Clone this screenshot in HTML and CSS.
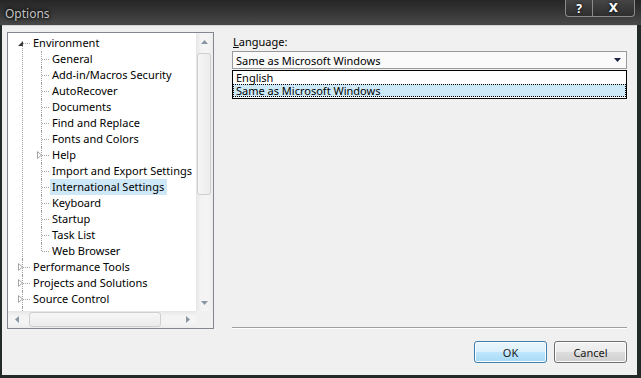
FILE: index.html
```html
<!DOCTYPE html>
<html lang="en">
<head>
    <meta charset="UTF-8">
    <title>Options</title>
    <link rel="stylesheet" href="styles.css">
</head>
<body>
    <div class="window">
        <div class="titlebar">
            <span class="title">Options</span>
            <div class="caption-buttons">
                <span class="cap-btn help">?</span>
                <span class="cap-btn close">X</span>
            </div>
        </div>

        <div class="client">
            <div class="main">
                <!-- Category tree -->
                <div class="tree-box">
                    <div class="tree-view">
                        <ul class="tree">
                            <li class="first">
                                <svg class="exp exp-open" width="5" height="5"><path d="M5 0 L5 5 L0 5 Z" fill="#3a3a3a"/></svg>
                                <span class="label">Environment</span>
                                <ul>
                                    <li><span class="label">General</span></li>
                                    <li><span class="label">Add-in/Macros Security</span></li>
                                    <li><span class="label">AutoRecover</span></li>
                                    <li><span class="label">Documents</span></li>
                                    <li><span class="label">Find and Replace</span></li>
                                    <li><span class="label">Fonts and Colors</span></li>
                                    <li>
                                        <svg class="exp" width="5" height="8"><path d="M0.5 0.5 L4.5 4 L0.5 7.5 Z" fill="#fff" stroke="#a6a6a6"/></svg>
                                        <span class="label">Help</span>
                                    </li>
                                    <li><span class="label">Import and Export Settings</span></li>
                                    <li><span class="label selected">International Settings</span></li>
                                    <li><span class="label">Keyboard</span></li>
                                    <li><span class="label">Startup</span></li>
                                    <li><span class="label">Task List</span></li>
                                    <li class="last"><span class="label">Web Browser</span></li>
                                </ul>
                            </li>
                            <li>
                                <svg class="exp" width="5" height="8"><path d="M0.5 0.5 L4.5 4 L0.5 7.5 Z" fill="#fff" stroke="#a6a6a6"/></svg>
                                <span class="label">Performance Tools</span>
                            </li>
                            <li>
                                <svg class="exp" width="5" height="8"><path d="M0.5 0.5 L4.5 4 L0.5 7.5 Z" fill="#fff" stroke="#a6a6a6"/></svg>
                                <span class="label">Projects and Solutions</span>
                            </li>
                            <li>
                                <svg class="exp" width="5" height="8"><path d="M0.5 0.5 L4.5 4 L0.5 7.5 Z" fill="#fff" stroke="#a6a6a6"/></svg>
                                <span class="label">Source Control</span>
                            </li>
                            <li class="more"></li>
                        </ul>
                    </div>

                    <div class="vscroll">
                        <span class="arrow-btn"><svg width="7" height="4"><path d="M3.5 0 L7 4 L0 4 Z" fill="#8a96a3"/></svg></span>
                        <span class="thumb-v"></span>
                        <span class="track-fill"></span>
                        <span class="arrow-btn"><svg width="7" height="4"><path d="M0 0 L7 0 L3.5 4 Z" fill="#8a96a3"/></svg></span>
                    </div>
                    <div class="hscroll">
                        <span class="arrow-btn"><svg width="4" height="7"><path d="M4 0 L4 7 L0 3.5 Z" fill="#8a96a3"/></svg></span>
                        <span class="thumb-h"></span>
                        <span class="track-fill"></span>
                        <span class="arrow-btn"><svg width="4" height="7"><path d="M0 0 L4 3.5 L0 7 Z" fill="#8a96a3"/></svg></span>
                    </div>
                    <div class="corner"></div>
                </div>

                <!-- Settings page -->
                <div class="settings">
                    <label class="field-label"><u>L</u>anguage:</label>
                    <div class="combo">
                        <span>Same as Microsoft Windows</span>
                        <svg width="7" height="4"><path d="M0 0 L7 0 L3.5 4 Z" fill="#1c2540"/></svg>
                    </div>
                    <ul class="listbox">
                        <li>English</li>
                        <li class="selected">Same as Microsoft Windows</li>
                    </ul>
                </div>
            </div>

            <div class="footer">
                <button class="btn default">OK</button>
                <button class="btn">Cancel</button>
            </div>
        </div>
    </div>
</body>
</html>
```

FILE: styles.css
```css
body {
    margin: 0;
    font-family: "Noto Sans", "Liberation Sans", sans-serif;
    font-size: 11px;
    color: #000;
    background: #1f2626;
}
.window {
    width: 641px;
    height: 378px;
    display: flex;
    flex-direction: column;
    background: #222a2a;
}

/* title bar */
.titlebar {
    height: 25px;
    display: flex;
    justify-content: space-between;
    background: linear-gradient(to bottom, #262626, #3a3a3a 60%, #4a4a4a);
}
.title {
    padding: 5px 0 0 5px;
    font-size: 12px;
    color: #c4c4c4;
    text-shadow: 0 0 3px #000, 0 0 5px #000;
}
.caption-buttons {
    display: flex;
    margin-right: 6px;
    height: 17px;
}
.cap-btn {
    display: flex;
    align-items: center;
    justify-content: center;
    color: #fff;
    font-weight: bold;
    font-size: 12px;
    border: 1px solid #8a8a8a;
    border-top: none;
    background: linear-gradient(to bottom, #454545, #2e2e2e);
    text-shadow: 0 0 3px #000;
}
.cap-btn.help {
    width: 26px;
    border-radius: 0 0 0 4px;
}
.cap-btn.close {
    width: 41px;
    border-left: none;
    border-radius: 0 0 4px 0;
    font-family: "DejaVu Sans", sans-serif;
}

/* client area */
.client {
    flex: 1;
    margin: 0 4px 3px 2px;
    background: #f0f0f0;
    box-shadow: inset 0 1px #d6d6d6;
}
.main {
    display: flex;
    gap: 18px;
    padding: 7px 10px 0 5px;
}

/* tree */
.tree-box {
    width: 207px;
    height: 297px;
    box-sizing: border-box;
    border: 1px solid #828790;
    display: grid;
    grid-template-columns: 1fr 17px;
    grid-template-rows: 1fr 17px;
    background: #fff;
}
.tree-view {
    overflow: hidden;
    padding-top: 2px;
}
.tree, .tree ul {
    list-style: none;
    margin: 0;
    padding: 0;
}
.tree li {
    position: relative;
    padding-left: 23px;
    white-space: nowrap;
}
.tree li.more {
    height: 16px;
}
.tree ul {
    margin-left: -4px;
}
.tree li::before {
    content: "";
    position: absolute;
    left: 14px;
    top: 0;
    height: 100%;
    border-left: 1px dotted #a0a0a0;
}
.tree li.first::before {
    top: 8px;
    height: calc(100% - 8px);
}
.tree li.last::before {
    height: 8px;
}
.tree li::after {
    content: "";
    position: absolute;
    left: 15px;
    top: 8px;
    width: 7px;
    border-top: 1px dotted #a0a0a0;
}
.exp {
    position: absolute;
    left: 10px;
    top: 4px;
    z-index: 1;
}
.exp-open {
    top: 6px;
}
.label {
    display: inline-block;
    height: 16px;
    line-height: 16px;
    padding: 0 3px 0 2px;
}
.label.selected {
    background: #cfe8f8;
}

/* scrollbars */
.vscroll, .hscroll {
    display: flex;
    background: linear-gradient(to right, #e6e6e6, #f4f4f4 30%, #f4f4f4 70%, #ececec);
}
.vscroll {
    flex-direction: column;
}
.hscroll {
    background: linear-gradient(to bottom, #e6e6e6, #f4f4f4 30%, #f4f4f4 70%, #ececec);
}
.arrow-btn {
    width: 17px;
    height: 17px;
    display: flex;
    align-items: center;
    justify-content: center;
    flex: none;
}
.track-fill {
    flex: 1;
}
.thumb-v {
    margin: 3px 2px 0 1px;
    height: 142px;
    border: 1px solid #cfcfcf;
    border-radius: 3px;
    background: linear-gradient(to right, #f6f6f6, #ececec);
    box-sizing: border-box;
}
.thumb-h {
    margin: 1px 0 1px 4px;
    width: 132px;
    border: 1px solid #cfcfcf;
    border-radius: 3px;
    background: linear-gradient(to bottom, #f6f6f6, #ececec);
    box-sizing: border-box;
}
.corner {
    background: #f0f0f0;
}

/* settings page */
.settings {
    width: 395px;
    height: 295px;
    border-bottom: 1px solid #a0a0a0;
    box-shadow: 0 1px #fff;
}
.field-label {
    display: block;
    line-height: 16px;
    padding: 2px 0 0 1px;
}
.combo {
    margin-top: 1px;
    height: 18px;
    box-sizing: border-box;
    border: 1px solid #9a9a9a;
    background: #fafafa;
    display: flex;
    align-items: center;
    justify-content: space-between;
    padding: 0 5px 0 3px;
}
.listbox {
    list-style: none;
    margin: 1px 0 0;
    padding: 0 0 1px;
    border: 1px solid #000;
    background: #fff;
}
.listbox li {
    height: 13px;
    line-height: 13px;
    padding-left: 3px;
}
.listbox li.selected {
    background: #cde8f6;
    outline: 1px dotted #000;
    outline-offset: -1px;
}

/* buttons */
.footer {
    display: flex;
    justify-content: flex-end;
    gap: 7px;
    padding: 12px 10px 0 0;
}
.btn {
    width: 73px;
    height: 22px;
    font-family: inherit;
    font-size: 11px;
    color: #1a1a1a;
    border: 1px solid #707070;
    border-radius: 3px;
    background: linear-gradient(to bottom, #f2f2f2, #ebebeb 50%, #dddddd 51%, #cfcfcf);
    box-shadow: inset 0 0 0 1px #fcfcfc;
    padding: 0;
}
.btn.default {
    border-color: #3c7fb1;
    background: linear-gradient(to bottom, #eaf6fd, #d9f0fc 50%, #bee6fd 51%, #a7d9f5);
}
```
